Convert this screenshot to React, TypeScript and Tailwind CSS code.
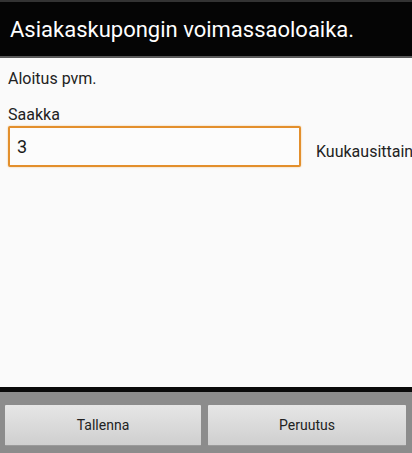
export default function App() {
  return (
    <div className="w-[412px] h-[453px] flex flex-col overflow-hidden bg-[#fafafa]" style={{ fontFamily: "Roboto, 'Noto Sans', sans-serif" }}>
      <div className="h-[2px] bg-[#333333]" />
      <div className="h-[54px] bg-[#050505] flex items-center pl-[10px] pt-[2px]">
        <span className="text-white text-[22px] leading-none">Asiakaskupongin voimassaoloaika.</span>
      </div>
      <div className="h-[2px] bg-[#5a5a5a]" />
      <div className="flex-1 bg-[#fafafa] flex flex-col px-[8px]">
        <div className="mt-[12px] text-[16px] leading-[17px] text-[#222222]">Aloitus pvm.</div>
        <div className="mt-[19px] text-[16px] leading-[18px] text-[#222222]">Saakka</div>
        <div className="flex items-end mt-[2px] whitespace-nowrap">
          <div className="w-[293px] h-[41px] shrink-0 border-2 border-[#e38f2c] rounded-[2px] bg-[#fcfcfc] flex items-center pl-[7px] text-[18px] text-[#1a1a1a] shadow-[0_0_2px_#f0c080]">3</div>
          <span className="ml-[15px] mb-[3px] text-[16px] text-[#222222]">Kuukausittain</span>
        </div>
      </div>
      <div className="h-[5px] bg-[#0a0a0a]" />
      <div className="h-[61px] bg-[#8c8c8c] flex gap-[7px] px-[5px] pt-[13px] pb-[7px]">
        <button className="w-[196px] h-[41px] bg-gradient-to-b from-[#e6e6e6] to-[#cfcfcf] border-b border-[#9a9a9a] text-[14px] text-[#222222] rounded-[1px]">Tallenna</button>
        <button className="w-[198px] h-[41px] bg-gradient-to-b from-[#e6e6e6] to-[#cfcfcf] border-b border-[#9a9a9a] text-[14px] text-[#222222] rounded-[1px]">Peruutus</button>
      </div>
    </div>
  );
}
